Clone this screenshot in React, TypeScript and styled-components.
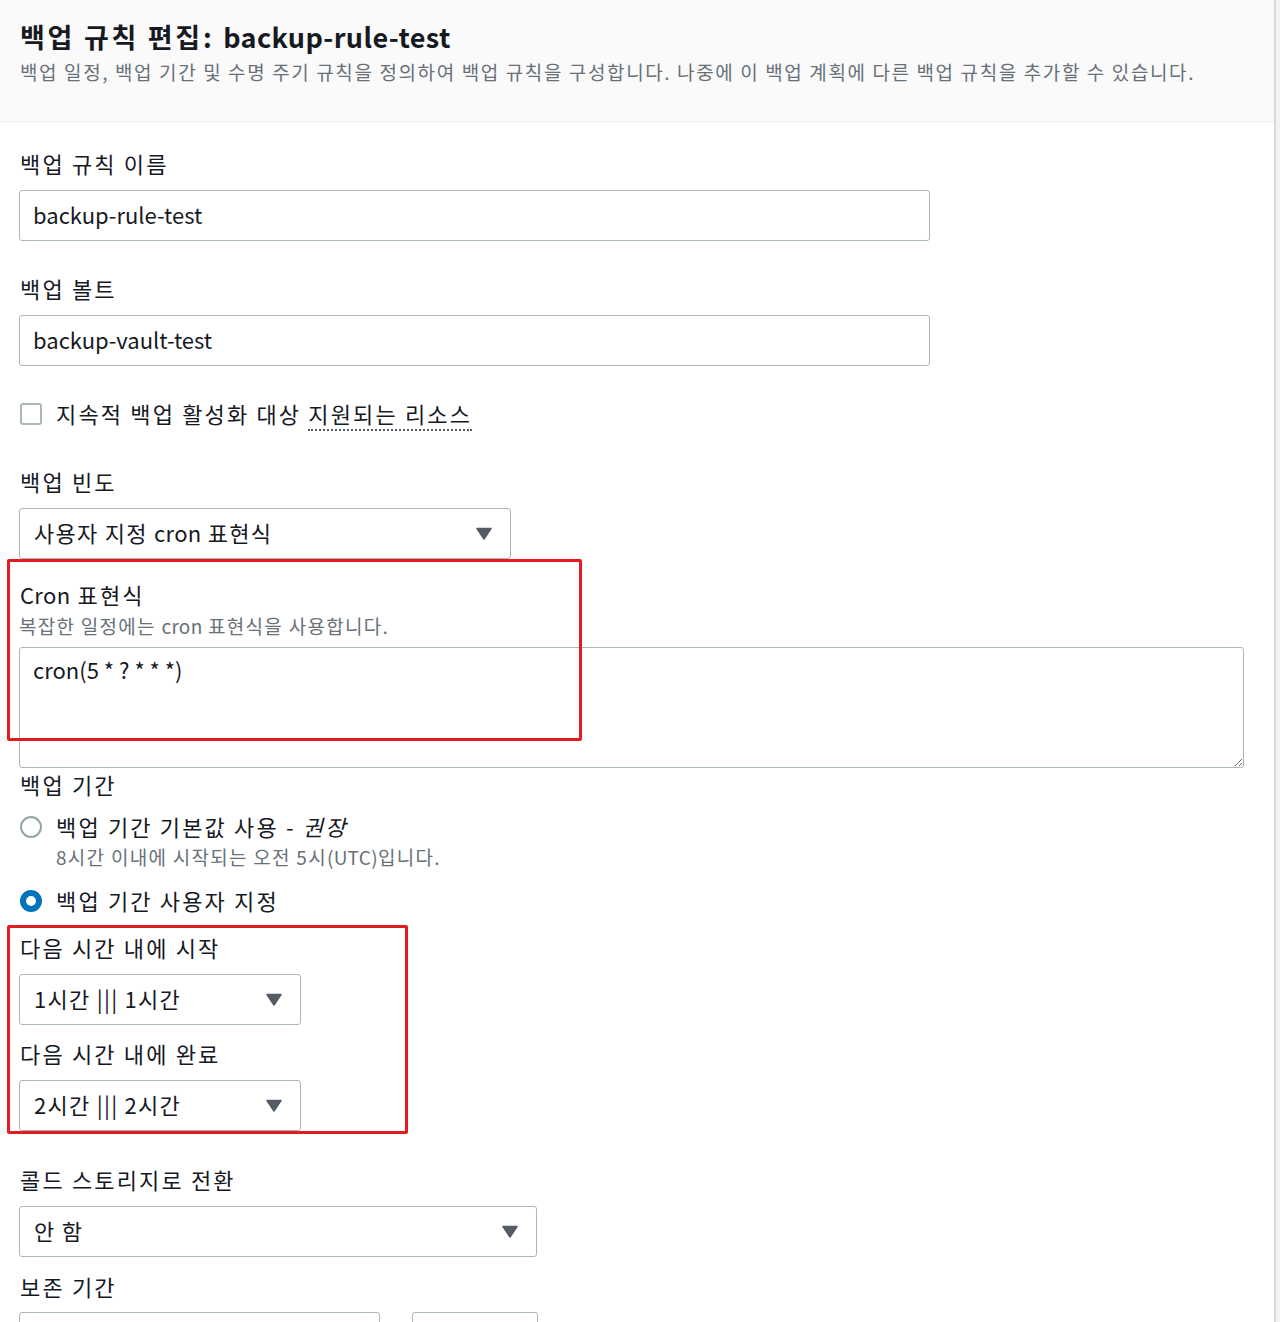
import styled, { createGlobalStyle } from "styled-components";

const GlobalStyle = createGlobalStyle`
  body {
    margin: 0;
    background: #f2f3f3;
    font-family: "Noto Sans CJK KR", "Noto Sans", sans-serif;
    color: #16191f;
    letter-spacing: 0.08em;
  }
`;

const Page = styled("div")`
  width: 1274px;
  min-height: 1322px;
  background: #ffffff;
  border-right: 2px solid #d5dbdb;
`;

const Header = styled("header")`
  background: #fafafa;
  border-bottom: 1px solid #eaeded;
  padding: 17px 20px 34px;
`;

const Title = styled("h1")`
  margin: 0;
  font-size: 27px;
  font-weight: 700;
  line-height: 40px;
  color: #16191f;
  letter-spacing: 0.1em;
`;

// Latin words inside Korean text keep a tight spacing
const Latin = styled("span")`
  letter-spacing: 0.015em;
`;

const Subtitle = styled("p")`
  margin: 0;
  font-size: 19px;
  line-height: 30px;
  color: #687078;
  letter-spacing: 0.085em;
`;

const Form = styled("div")`
  position: relative;
  display: flex;
  flex-direction: column;
  padding: 25px 19px 0;
`;

const Field = styled("div")<{ $mt?: number; $gap?: number }>`
  display: flex;
  flex-direction: column;
  gap: ${(p) => p.$gap ?? 11}px;
  margin-top: ${(p) => p.$mt ?? 0}px;
`;

const Label = styled("label")`
  font-size: 22px;
  line-height: 32px;
  color: #16191f;
  padding-left: 1px;
  letter-spacing: 0.098em;
`;

const Description = styled("div")<{ $mt?: number }>`
  font-size: 19px;
  line-height: 28px;
  color: #687078;
  margin-top: ${(p) => p.$mt ?? 0}px;
`;

const TextInput = styled("input")<{ $width: number }>`
  box-sizing: border-box;
  width: ${(p) => p.$width}px;
  height: 51px;
  padding: 0 13px 3px;
  border: 1px solid #aab7b8;
  border-radius: 3px;
  font-family: inherit;
  font-size: 22px;
  letter-spacing: 0;
  color: #16191f;
  background: #fff;
  outline: none;
`;

const TextArea = styled("textarea")`
  box-sizing: border-box;
  width: 1225px;
  height: 121px;
  margin-top: 7px;
  padding: 6px 13px;
  border: 1px solid #aab7b8;
  border-radius: 3px;
  font-family: inherit;
  font-size: 22px;
  line-height: 30px;
  letter-spacing: 0;
  color: #16191f;
  resize: vertical;
  outline: none;
`;

const SelectBox = styled("div")<{ $width: number }>`
  box-sizing: border-box;
  width: ${(p) => p.$width}px;
  height: 51px;
  display: flex;
  align-items: center;
  justify-content: space-between;
  padding: 0 18px 3px 14px;
  border: 1px solid #aab7b8;
  border-radius: 3px;
  font-size: 22px;
  color: #16191f;
  background: #fff;
`;

const CaretWrap = styled("span")`
  display: flex;
  padding-top: 3px;
`;

const CheckRow = styled("div")<{ $mt?: number }>`
  display: flex;
  align-items: center;
  gap: 14px;
  height: 32px;
  margin-top: ${(p) => p.$mt ?? 0}px;
  padding-left: 1px;
  font-size: 22px;
  color: #16191f;
  letter-spacing: 0.098em;
`;

const RowText = styled("span")`
  padding-bottom: 3px;
`;

const CheckBox = styled("span")`
  box-sizing: border-box;
  width: 22px;
  height: 22px;
  border: 2px solid #aab7b8;
  border-radius: 3px;
  background: #fff;
`;

const Radio = styled("span")<{ $checked?: boolean }>`
  box-sizing: border-box;
  width: 22px;
  height: 22px;
  border-radius: 50%;
  background: #fff;
  border: ${(p) => (p.$checked ? "6px solid #0073bb" : "2px solid #95a5a6")};
`;

const DottedLink = styled("span")`
  border-bottom: 2px dotted #545b64;
  line-height: 28px;
`;

const RadioDescription = styled(Description)`
  padding-left: 37px;
`;

const RetentionRow = styled("div")`
  display: flex;
  gap: 32px;
`;

const Highlight = styled("div")<{ $top: number; $width: number; $height: number }>`
  position: absolute;
  left: 7px;
  top: ${(p) => p.$top}px;
  width: ${(p) => p.$width}px;
  height: ${(p) => p.$height}px;
  box-sizing: border-box;
  border: 3px solid #e31b23;
  border-radius: 2px;
  pointer-events: none;
`;

function Caret() {
  return (
    <CaretWrap>
      <svg width="16" height="13" viewBox="0 0 16 13">
        <path d="M1 1.5 L15 1.5 L8 12 Z" fill="#545b64" stroke="#545b64" strokeWidth="1.5" strokeLinejoin="round" />
      </svg>
    </CaretWrap>
  );
}

function Select({ children, width }: { children: React.ReactNode; width: number }) {
  return (
    <SelectBox $width={width}>
      <span>{children}</span>
      <Caret />
    </SelectBox>
  );
}

export default function App() {
  return (
    <>
      <GlobalStyle />
      <Page>
        <Header>
          <Title>
            백업 규칙 편집: <Latin>backup-rule-test</Latin>
          </Title>
          <Subtitle>
            백업 일정, 백업 기간 및 수명 주기 규칙을 정의하여 백업 규칙을 구성합니다. 나중에 이 백업 계획에 다른 백업 규칙을 추가할 수 있습니다.
          </Subtitle>
        </Header>
        <Form>
          <Field>
            <Label>백업 규칙 이름</Label>
            <TextInput $width={911} value="backup-rule-test" readOnly />
          </Field>
          <Field $mt={31}>
            <Label>백업 볼트</Label>
            <TextInput $width={911} value="backup-vault-test" readOnly />
          </Field>
          <CheckRow $mt={32}>
            <CheckBox />
            <RowText>
              지속적 백업 활성화 대상 <DottedLink>지원되는 리소스</DottedLink>
            </RowText>
          </CheckRow>
          <Field $mt={35}>
            <Label>백업 빈도</Label>
            <Select width={492}>
              사용자 지정 <Latin>cron</Latin> 표현식
            </Select>
          </Field>
          <Field $mt={19} $gap={0}>
            <Label>
              <Latin>Cron</Latin> 표현식
            </Label>
            <Description $mt={2}>
              복잡한 일정에는 <Latin>cron</Latin> 표현식을 사용합니다.
            </Description>
            <TextArea value="cron(5 * ? * * *)" readOnly />
          </Field>
          <Field $gap={0}>
            <Label>백업 기간</Label>
            <CheckRow $mt={11}>
              <Radio />
              <RowText>
                백업 기간 기본값 사용 - <em>권장</em>
              </RowText>
            </CheckRow>
            <RadioDescription>
              8시간 이내에 시작되는 오전 5시<Latin>(UTC)</Latin>입니다.
            </RadioDescription>
            <CheckRow $mt={14}>
              <Radio $checked />
              <RowText>백업 기간 사용자 지정</RowText>
            </CheckRow>
          </Field>
          <Field $mt={14}>
            <Label>다음 시간 내에 시작</Label>
            <Select width={282}>1시간 ||| 1시간</Select>
          </Field>
          <Field $mt={12} $gap={11}>
            <Label>다음 시간 내에 완료</Label>
            <Select width={282}>2시간 ||| 2시간</Select>
          </Field>
          <Field $mt={32}>
            <Label>콜드 스토리지로 전환</Label>
            <Select width={518}>안 함</Select>
          </Field>
          <Field $mt={13} $gap={10}>
            <Label>보존 기간</Label>
            <RetentionRow>
              <TextInput $width={361} value="" readOnly />
              <TextInput $width={126} value="" readOnly />
            </RetentionRow>
          </Field>
          <Highlight $top={437} $width={575} $height={182} />
          <Highlight $top={803} $width={401} $height={209} />
        </Form>
      </Page>
    </>
  );
}
